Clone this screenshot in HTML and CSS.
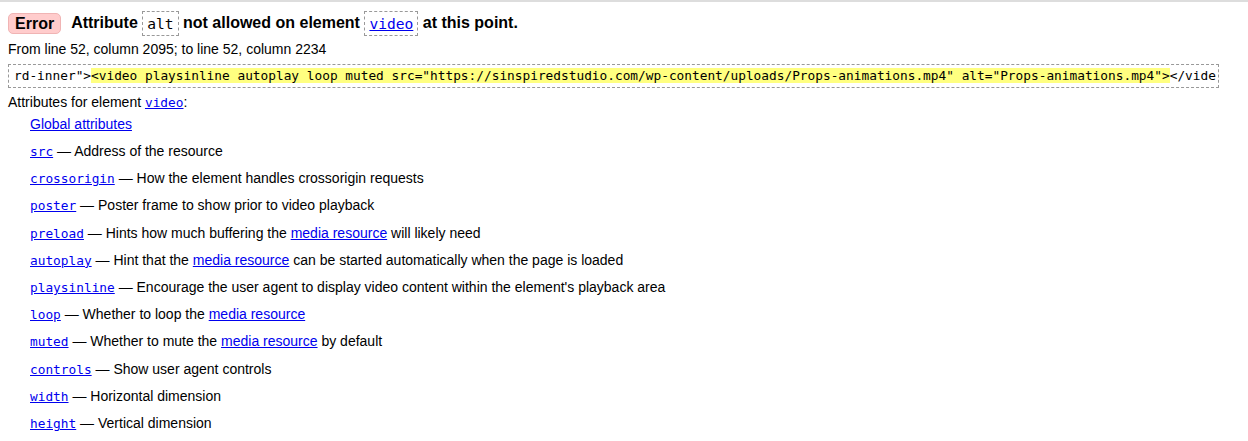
FILE: index.html
```html
<!DOCTYPE html>
<html>
<head>
<meta charset="utf-8">
<link rel="stylesheet" href="styles.css">
</head>
<body>
<div class="msg">
  <p class="head"><strong class="badge">Error</strong> <span class="title">Attribute <code class="hcode">alt</code> not allowed on element <code class="hcode"><a href="#">video</a></code> at this point.</span></p>
  <p class="loc">From line 52, column 2095; to line 52, column 2234</p>
  <p class="extract"><code class="ex">rd-inner"&gt;<b class="hl">&lt;video playsinline autoplay loop muted src="https://sinspiredstudio.com/wp-content/uploads/Props-animations.mp4" alt="Props-animations.mp4"&gt;</b>&lt;/vide</code></p>
  <dl class="attrs">
    <dt>Attributes for element <code><a href="#">video</a></code>:</dt>
    <dd><a href="#">Global attributes</a></dd>
    <dd><code><a href="#">src</a></code> — Address of the resource</dd>
    <dd><code><a href="#">crossorigin</a></code> — How the element handles crossorigin requests</dd>
    <dd><code><a href="#">poster</a></code> — Poster frame to show prior to video playback</dd>
    <dd><code><a href="#">preload</a></code> — Hints how much buffering the <a href="#">media resource</a> will likely need</dd>
    <dd><code><a href="#">autoplay</a></code> — Hint that the <a href="#">media resource</a> can be started automatically when the page is loaded</dd>
    <dd><code><a href="#">playsinline</a></code> — Encourage the user agent to display video content within the element's playback area</dd>
    <dd><code><a href="#">loop</a></code> — Whether to loop the <a href="#">media resource</a></dd>
    <dd><code><a href="#">muted</a></code> — Whether to mute the <a href="#">media resource</a> by default</dd>
    <dd><code><a href="#">controls</a></code> — Show user agent controls</dd>
    <dd><code><a href="#">width</a></code> — Horizontal dimension</dd>
    <dd><code><a href="#">height</a></code> — Vertical dimension</dd>
  </dl>
</div>
</body>
</html>
```
FILE: styles.css
```css
html, body {
  margin: 0;
  padding: 0;
  background: #fff;
}
body {
  font-family: "Liberation Sans", Arial, sans-serif;
  font-size: 14px;
  color: #000;
}
a { color: #00e; }
code {
  font-family: "DejaVu Sans Mono", "Liberation Mono", monospace;
  font-size: 12.8px;
}
.msg {
  border-top: 2px solid #ddd;
  padding: 0 8px;
}
.head {
  margin: 0;
  padding-top: 7px;
  height: 28px;
  display: flex;
  align-items: center;
  font-size: 16px;
  line-height: 20px;
}
.badge {
  display: inline-block;
  background: #fcc;
  border: 1px solid #f0b4b4;
  border-radius: 5px;
  padding: 0 6px;
  line-height: 19px;
  margin-right: 10px;
}
.title { font-weight: bold; }
.hcode {
  display: inline-block;
  font-weight: normal;
  font-size: 14.6px;
  border: 1px dashed #999;
  padding: 1px 4px;
  line-height: 21px;
  vertical-align: middle;
}
.loc {
  margin: 0;
  padding-top: 2px;
  line-height: 20px;
}
.extract {
  margin: 5px 0 0;
}
.ex {
  display: inline-block;
  white-space: pre;
  border: 1px dashed #999;
  padding: 0 2px 0 5px;
  line-height: 22px;
}
.hl {
  font-weight: normal;
  background: #ffff80;
}
.attrs {
  margin: 4px 0 0;
}
.attrs dt {
  line-height: 20px;
}
.attrs dd {
  margin: 0 0 0 22px;
  line-height: 27.2px;
}
.attrs dd:first-of-type {
  line-height: 22px;
  margin-bottom: 3px;
}
```
